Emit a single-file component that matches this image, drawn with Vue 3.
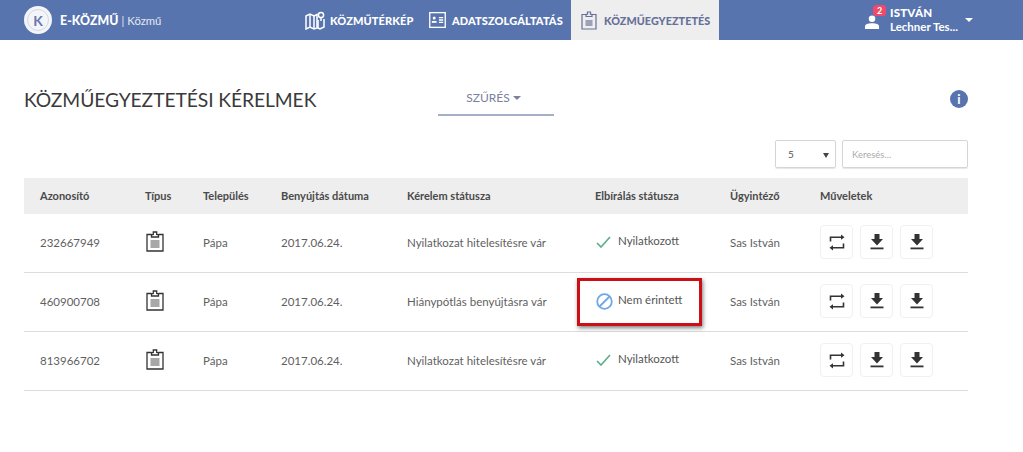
<script setup>
const rows = [
  { id: '232667949', req: 'Nyilatkozat hitelesítésre vár', ok: true, status: 'Nyilatkozott' },
  { id: '460900708', req: 'Hiánypótlás benyújtásra vár', ok: false, status: 'Nem érintett' },
  { id: '813966702', req: 'Nyilatkozat hitelesítésre vár', ok: true, status: 'Nyilatkozott' }
]
const heads = ['Azonosító', 'Típus', 'Település', 'Benyújtás dátuma', 'Kérelem státusza', 'Elbírálás státusza', 'Ügyintéző', 'Műveletek']
</script>

<template>
  <div class="page">
    <header class="top">
      <div class="brand">
        <span class="logo"><span class="logoin">K</span></span>
        <b class="bname">E-KÖZMŰ</b>
        <span class="bsep">|</span>
        <span class="bsub">Közmű</span>
      </div>
      <nav class="nav">
        <a class="tab t1">
          <svg width="20" height="19" viewBox="0 0 20 19" fill="none" stroke="#fff" stroke-width="1.5">
            <path d="M1 5l4 -2 4 2 3 -1.500V17l-3 1-4-2-4 2z" />
            <path d="M5 3v13M9 5v13" />
            <path d="M13 9v8l2 1 4-2V8" />
            <circle cx="16" cy="4" r="2.600" />
            <path d="M16 7v3" />
          </svg>
          KÖZMŰTÉRKÉP
        </a>
        <a class="tab t2">
          <svg width="17" height="18" viewBox="0 0 18 18" fill="none" stroke="#fff" stroke-width="1.400">
            <rect x="0.800" y="1.200" width="16.400" height="15.600" />
            <circle cx="5.500" cy="7" r="1.600" fill="#fff" stroke="none" />
            <path d="M3 12h5v-2H3z" fill="#fff" stroke="none" />
            <path d="M10.500 6.500h4.500M10.500 9h4.500M10.500 11.500h4.500" />
          </svg>
          ADATSZOLGÁLTATÁS
        </a>
        <a class="tab active">
          <svg class="clip" width="16" height="19" viewBox="0 0 16 19" fill="none" stroke="#667099" stroke-width="1.200">
            <path d="M5 3.500H1V18h14V3.500h-4" />
            <path d="M5 5.500V3.500l1.500-.3V1h3v2.200l1.500 .3v2z" fill="#eee" />
            <rect x="4.500" y="9" width="7" height="6" fill="#9ca1b8" stroke="none" />
          </svg>
          KÖZMŰEGYEZTETÉS
        </a>
      </nav>
      <div class="user">
        <span class="avatar">
          <svg width="15" height="16" viewBox="0 0 16 17" fill="#fff">
            <circle cx="7.500" cy="6" r="3.500" />
            <path d="M0 17v-2.500C0 12 3 11 7.500 11S15 12 15 14.500V17z" />
          </svg>
          <span class="badge">2</span>
        </span>
        <span class="uname">
          <b>ISTVÁN</b>
          <span>Lechner Tes...</span>
        </span>
        <span class="ucaret"></span>
      </div>
    </header>

    <main class="main">
      <div class="titlebar">
        <h1>KÖZMŰEGYEZTETÉSI KÉRELMEK</h1>
        <div class="filter">SZŰRÉS <span class="fcaret"></span></div>
        <span class="info">i</span>
      </div>

      <div class="tools">
        <div class="select"><span>5</span><span class="scaret"></span></div>
        <div class="search">Keresés...</div>
      </div>

      <div class="table">
        <div class="row head">
          <div v-for="h in heads" :key="h">{{ h }}</div>
        </div>
        <div v-for="r in rows" :key="r.id" class="row body">
          <div>{{ r.id }}</div>
          <div>
            <svg class="type" width="18" height="21" viewBox="0 0 18 21" fill="none" stroke="#333" stroke-width="1.300">
              <path d="M5.500 3.500H1V20h16V3.500h-4.500" />
              <path d="M5.500 6V3.800L7.300 3.400V1h3.400v2.400l1.800 .4V6z" fill="#fff" stroke-width="1.300" />
              <rect x="4.500" y="9" width="9" height="8" fill="#a8a8a8" stroke="none" />
            </svg>
          </div>
          <div>Pápa</div>
          <div>2017.06.24.</div>
          <div>{{ r.req }}</div>
          <div class="st">
            <svg v-if="r.ok" class="ok" width="15" height="12" viewBox="0 0 15 12" fill="none" stroke="#5fb08a" stroke-width="1.700">
              <path d="M1 7l4 4 9-10" />
            </svg>
            <svg v-else class="ban" width="17" height="17" viewBox="0 0 17 17" fill="none" stroke="#6fa8e6" stroke-width="1.800">
              <circle cx="8.500" cy="8.500" r="7.300" />
              <path d="M3.500 13.500l10-10" />
            </svg>
            <span>{{ r.status }}</span>
          </div>
          <div>Sas István</div>
          <div class="acts">
            <button class="act">
              <svg width="16" height="17" viewBox="0 0 16 17" fill="none" stroke="#333" stroke-width="1.600">
                <path d="M1.500 7.500V3.200H14" />
                <path d="M12 .6l3.500 2.600L12 5.800z" fill="#333" stroke="none" />
                <path d="M14.500 9.500v4.300H2" />
                <path d="M4 11.200L.5 13.800 4 16.400z" fill="#333" stroke="none" />
              </svg>
            </button>
            <button class="act" v-for="n in 2" :key="n">
              <svg width="14" height="16" viewBox="0 0 14 16" fill="#333">
                <path d="M4.500 0h5v5H13L7 11.500 1 5h3.500z" />
                <rect x="0.500" y="13.500" width="13" height="1.800" />
              </svg>
            </button>
          </div>
        </div>
      </div>
    </main>

    <div class="mark"></div>
  </div>
</template>

<style>
html, body { margin: 0; background: #fff; }
</style>

<style scoped>
.page {
  position: relative;
  width: 1023px;
  height: 452px;
  overflow: hidden;
  font-family: Lato, "Open Sans", sans-serif;
  color: #4d4d4d;
  background: #fff;
}
.top {
  height: 40px;
  background: #5874ae;
  color: #fff;
  display: flex;
  align-items: center;
  padding-left: 24px;
  box-sizing: border-box;
}
.brand { display: flex; align-items: center; width: 281px; }
.logo {
  width: 28px;
  height: 28px;
  border-radius: 50%;
  box-sizing: border-box;
  background: #f4f5f9;
  padding: 3px;
  margin-right: 8px;
}
.logoin {
  display: flex;
  align-items: center;
  justify-content: center;
  width: 100%;
  height: 100%;
  box-sizing: border-box;
  border: 1px solid #d3d8e8;
  border-radius: 50%;
  color: #6c77ad;
  font-size: 14px;
  font-weight: 700;
}
.bname { font-size: 12.300px; font-weight: 900; letter-spacing: .1px; }
.bsep { font-size: 11px; margin: 0 3px 0 3px; opacity: .85; }
.bsub { font-size: 11.300px; font-weight: 400; color: #e4e8f2; }
.nav { display: flex; height: 40px; }
.tab {
  display: flex;
  align-items: center;
  font-size: 11px;
  font-weight: 900;
  letter-spacing: .1px;
  white-space: nowrap;
}
.t1 { width: 124px; gap: 5px; }
.t1 svg { margin-top: 1px; }
.t2 { width: 142px; gap: 6px; }
.active {
  width: 148px;
  box-sizing: border-box;
  padding-left: 10px;
  gap: 7px;
  background: #eeeeee;
  color: #667099;
  font-size: 10.800px;
  letter-spacing: .05px;
}
.user { display: flex; align-items: center; margin-left: 146px; }
.avatar { position: relative; width: 16px; height: 17px; margin-top: 7px; margin-right: 9px; }
.avatar svg { display: block; margin-top: -2px; margin-left: 0; }
.badge {
  position: absolute;
  top: -10px;
  left: 8px;
  width: 13px;
  height: 11px;
  border-radius: 3px;
  background: #ef4a6b;
  font-size: 9px;
  font-weight: 700;
  line-height: 11px;
  text-align: center;
}
.uname { display: flex; flex-direction: column; font-size: 11.500px; line-height: 14px; width: 75px; white-space: nowrap; }
.uname b { font-weight: 900; letter-spacing: .2px; }
.uname span { font-weight: 700; }
.ucaret {
  width: 0; height: 0;
  border: 4px solid transparent;
  border-top: 4px solid #fff;
  margin-top: 4px;
}
.main { padding: 0 55px 0 24px; }
.titlebar { height: 98px; position: relative; display: flex; align-items: center; padding-top: 20px; box-sizing: border-box; }
h1 {
  margin: 0;
  font-size: 19.300px;
  font-weight: 400;
  color: #3a3a3a;
  width: 414px;
  letter-spacing: -.1px;
  white-space: nowrap;
}
.filter {
  width: 116px;
  height: 34px;
  margin-bottom: 1px;
  padding-right: 5px;
  box-sizing: border-box;
  border-bottom: 2px solid #a6afc8;
  text-align: center;
  line-height: 32px;
  font-size: 12px;
  color: #7b80a0;
}
.fcaret {
  display: inline-block;
  border: 4px solid transparent;
  border-top: 4px solid #7b80a0;
  margin: 0 0 -2px 0;
}
.info {
  margin-left: auto;
  width: 18px;
  height: 18px;
  border-radius: 50%;
  background: #5874ae;
  color: #fff;
  font-size: 13px;
  font-weight: 700;
  text-align: center;
  line-height: 18px;
}
.tools { display: flex; justify-content: flex-end; gap: 6px; height: 40px; padding-top: 2px; box-sizing: border-box; }
.select, .search {
  height: 28px;
  box-sizing: border-box;
  border: 1px solid #d5d5d5;
  border-radius: 2px;
  box-shadow: 0 1px 1px #e6e6e6;
  display: flex;
  align-items: center;
  font-size: 10px;
}
.select { width: 61px; padding: 0 6px 0 12px; justify-content: space-between; color: #555; }
.scaret { border: 3.500px solid transparent; border-top: 5px solid #444; margin-top: 5px; }
.search { width: 126px; padding-left: 9px; color: #aaa; font-size: 9.500px; }
.table { width: 944px; }
.row {
  display: grid;
  grid-template-columns: 105px 58px 78px 126px 188px 135px 90px 148px;
  align-items: center;
  padding-left: 16px;
}
.head {
  height: 36px;
  background: #eeeeee;
  font-size: 11px;
  font-weight: 700;
  color: #4a4a4a;
  padding-bottom: 1px;
  box-sizing: border-box;
}
.body {
  height: 59px;
  box-sizing: border-box;
  border-bottom: 1px solid #dcdcdc;
  font-size: 11.500px;
  color: #5f5f5f;
  padding-bottom: 2px;
}
.type { display: block; margin-top: -1px; margin-left: 1px; }
.st { display: flex; align-items: center; gap: 5px; margin-top: -3px; color: #555; white-space: nowrap; margin-left: 1px; }
.st svg.ok { margin-right: 2px; margin-top: 3px; }
.st svg.ban { margin-top: 4px; }
.row > div { white-space: nowrap; }
.acts { display: flex; gap: 7px; }
.act {
  width: 33px;
  height: 34px;
  padding: 0;
  background: #fff;
  border: 1px solid #f0f0f0;
  border-radius: 4px;
  display: flex;
  align-items: center;
  justify-content: center;
}
.mark {
  position: absolute;
  left: 577px;
  top: 278px;
  width: 125px;
  height: 48px;
  box-sizing: border-box;
  border: 3px solid #cc0f14;
  box-shadow: 1px 2px 4px rgba(0,0,0,.5);
}
</style>
